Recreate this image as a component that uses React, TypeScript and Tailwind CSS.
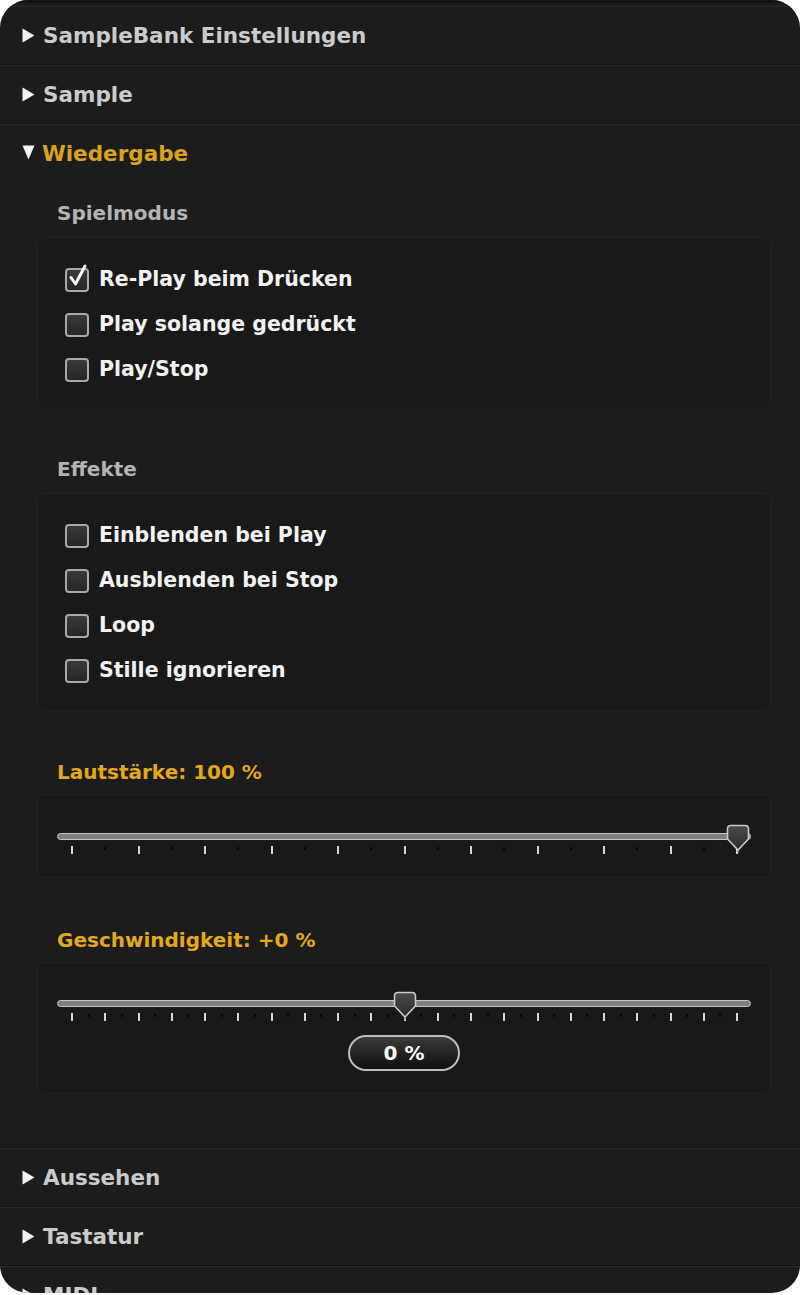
import React from 'react';

const FONT = "font-['DejaVu_Sans',sans-serif]";

const Arrow: React.FC<{ open?: boolean }> = ({ open }) =>
  open ? (
    <svg width="13" height="15" viewBox="0 0 13 15" className="mr-[7px] mt-[-3px] shrink-0">
      <polygon points="0.5,0.5 12.5,0.5 6.5,14.5" fill="#f2f2f2" />
    </svg>
  ) : (
    <svg width="13" height="15" viewBox="0 0 13 15" className="mr-[8px] shrink-0">
      <polygon points="0.5,0.5 12.5,7.5 0.5,14.5" fill="#f2f2f2" />
    </svg>
  );

const Header: React.FC<{ title: string; open?: boolean }> = ({ title, open }) => (
  <div
    className={`flex items-center pl-[22px] border-t border-[#2a2a2a] ${
      open ? 'h-[58px]' : 'h-[59px] border-b border-b-[#141414]'
    }`}
  >
    <Arrow open={open} />
    <span className={`text-[21.5px] font-bold leading-none ${open ? 'text-[#d9a31d]' : 'text-[#cbcbcb]'}`}>
      {title}
    </span>
  </div>
);

const Checkbox: React.FC<{ label: string; checked?: boolean }> = ({ label, checked }) => (
  <div className="flex h-[45px] items-center">
    <div className="relative h-[24px] w-[24px] shrink-0 rounded-[4px] border-2 border-[#a8a8a8] bg-linear-to-b from-[#3a3a3a] to-[#262626]">
      {checked && (
        <svg width="20" height="24" viewBox="0 0 20 24" className="absolute left-[1px] top-[-6px]">
          <path d="M3 13.5 L7.5 20 L17 2" fill="none" stroke="#f4f4f4" strokeWidth="3" strokeLinecap="round" strokeLinejoin="round" />
        </svg>
      )}
    </div>
    <span className="ml-[10px] text-[20.5px] font-bold leading-none text-[#f2f2f2]">{label}</span>
  </div>
);

const GroupLabel: React.FC<{ text: string; accent?: boolean; mb?: string }> = ({ text, accent, mb }) => (
  <div className={`flex h-[24px] items-center pl-[20px] ${mb ?? 'mb-[12px]'}`}>
    <span className={`text-[20px] font-bold leading-none ${accent ? 'text-[#e2a91e]' : 'text-[#b4b4b4]'}`}>{text}</span>
  </div>
);

const Thumb: React.FC = () => (
  <svg width="24" height="30" viewBox="0 0 24 30">
    <defs>
      <linearGradient id="thumbFill" x1="0" y1="0" x2="0" y2="1">
        <stop offset="0" stopColor="#4a4a4a" />
        <stop offset="1" stopColor="#2c2c2c" />
      </linearGradient>
    </defs>
    <path
      d="M5 1.5 H19 Q22.5 1.5 22.5 5 V15 L12 26 L1.5 15 V5 Q1.5 1.5 5 1.5 Z"
      fill="url(#thumbFill)"
      stroke="#c9c9c9"
      strokeWidth="1.6"
    />
    <line x1="12" y1="26" x2="12" y2="29" stroke="#9a9a9a" strokeWidth="1.2" />
  </svg>
);

const Slider: React.FC<{ majors: number; value: number }> = ({ majors, value }) => {
  const ticks: ('major' | 'minor')[] = [];
  for (let i = 0; i < majors; i++) {
    ticks.push('major');
    if (i < majors - 1) ticks.push('minor');
  }
  return (
    <div>
      <div className="h-[7px] rounded-full border border-[#c6c6c6] bg-[#808080]" />
      <div className="relative ml-[14px] mr-[13px] mt-[6px] flex h-[9px] items-start justify-between">
        {ticks.map((t, i) =>
          t === 'major' ? (
            <span key={i} className="h-[8px] w-[2px] bg-[#d6d6d6]" />
          ) : (
            <span key={i} className="mt-[1px] h-[3px] w-[2px] bg-[#050505]" />
          )
        )}
        <div className="absolute top-[-22px] -translate-x-1/2" style={{ left: `${value * 100}%` }}>
          <Thumb />
        </div>
      </div>
    </div>
  );
};

export default function App() {
  return (
    <div className={`min-h-screen bg-white ${FONT}`}>
      <div className="h-[1293px] overflow-hidden rounded-[28px] bg-[#1c1c1c]">
        <div className="h-[3px] bg-[#131313]" />
        <div className="h-[3px]" />
        <Header title="SampleBank Einstellungen" />
        <Header title="Sample" />
        <Header title="Wiedergabe" open />

        <div className="border-b border-[#141414] pb-[53px] pl-[37px] pr-[29px] pt-[19px]">
          <GroupLabel text="Spielmodus" />
          <div className="rounded-[8px] border border-[#222222] bg-[#191919] pb-[17px] pl-[27px] pt-[19px]">
            <Checkbox label="Re-Play beim Drücken" checked />
            <Checkbox label="Play solange gedrückt" />
            <Checkbox label="Play/Stop" />
          </div>

          <div className="mt-[47px]">
            <GroupLabel text="Effekte" />
            <div className="rounded-[8px] border border-[#222222] bg-[#191919] pb-[17px] pl-[27px] pt-[19px]">
              <Checkbox label="Einblenden bei Play" />
              <Checkbox label="Ausblenden bei Stop" />
              <Checkbox label="Loop" />
              <Checkbox label="Stille ignorieren" />
            </div>
          </div>

          <div className="mt-[49px]">
            <GroupLabel text="Lautstärke: 100 %" accent mb="mb-[10px]" />
            <div className="rounded-[8px] border border-[#222222] bg-[#191919] px-[19px] pb-[22px] pt-[38px]">
              <Slider majors={11} value={1} />
            </div>
          </div>

          <div className="mt-[50px]">
            <GroupLabel text="Geschwindigkeit: +0 %" accent mb="mb-[10px]" />
            <div className="rounded-[8px] border border-[#222222] bg-[#191919] px-[19px] pb-[22px] pt-[37px]">
              <Slider majors={21} value={0.5} />
              <div className="mt-[13px] flex justify-center">
                <div className="flex h-[36px] w-[112px] items-center justify-center rounded-full border-2 border-[#bdbdbd] bg-linear-to-b from-[#3c3c3c] to-[#0f0f0f]">
                  <span className="text-[20px] font-bold leading-none text-white">0 %</span>
                </div>
              </div>
            </div>
          </div>
        </div>

        <Header title="Aussehen" />
        <Header title="Tastatur" />
        <Header title="MIDI" />
      </div>
    </div>
  );
}
